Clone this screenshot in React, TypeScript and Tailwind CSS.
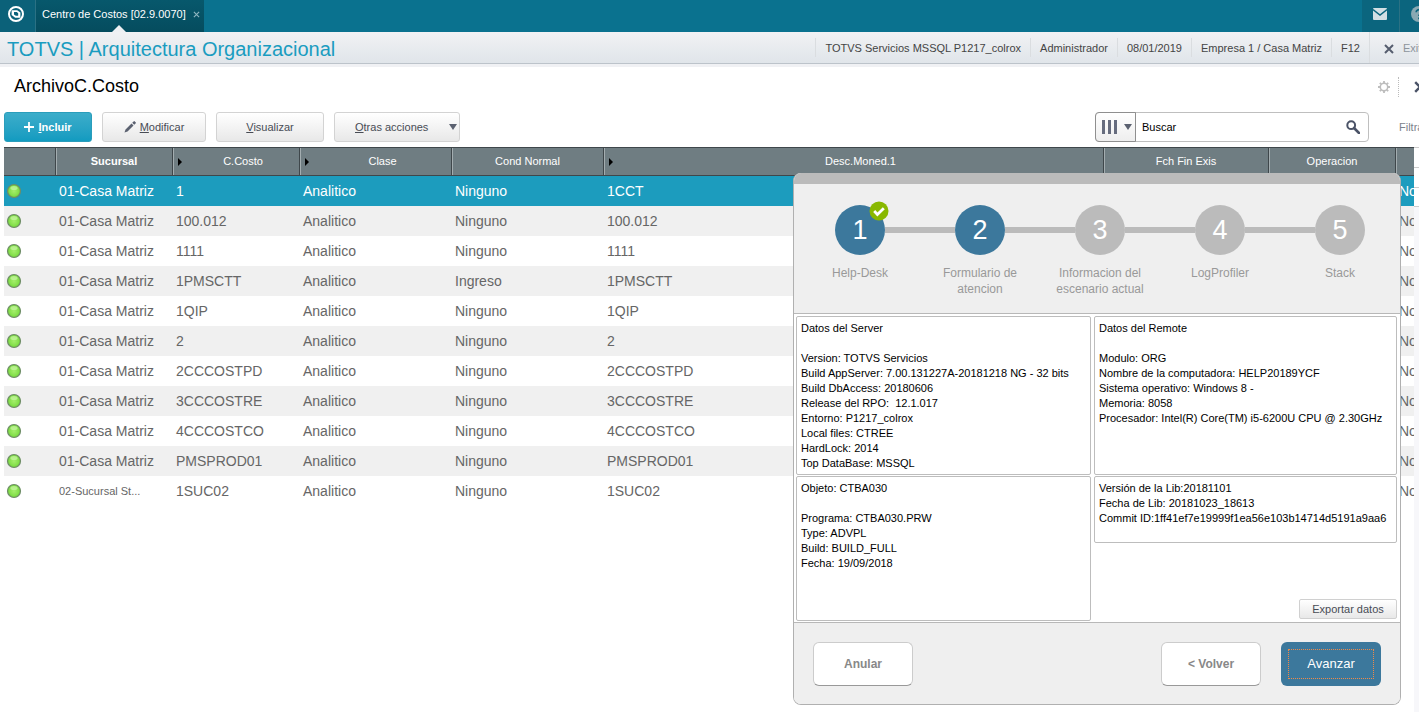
import type { ReactNode } from "react";
import { clsx } from "clsx";

type Row = {
  branch: string;
  code: string;
  kind: string;
  normal: string;
  desc: string;
};

const makeRow = (code: string, normal = "Ninguno", desc = code): Row => ({
  branch: "01-Casa Matriz",
  code,
  kind: "Analitico",
  normal,
  desc,
});

const rows: Row[] = [
  makeRow("1", "Ninguno", "1CCT"),
  makeRow("100.012"),
  makeRow("1111"),
  makeRow("1PMSCTT", "Ingreso"),
  makeRow("1QIP"),
  makeRow("2"),
  makeRow("2CCCOSTPD"),
  makeRow("3CCCOSTRE"),
  makeRow("4CCCOSTCO"),
  makeRow("PMSPROD01"),
  { ...makeRow("1SUC02"), branch: "02-Sucursal St..." },
];

const columns = [
  { label: "", width: "w-[52px]" },
  { label: "Sucursal", width: "w-[117px]", bold: true },
  { label: "C.Costo", width: "w-[127px]", arrow: true },
  { label: "Clase", width: "w-[152px]", arrow: true },
  { label: "Cond Normal", width: "w-[152px]" },
  { label: "Desc.Moned.1", width: "", arrow: true },
  { label: "Fch Fin Exis", width: "w-[165px]" },
  { label: "Operacion", width: "w-[127px]" },
  { label: "", width: "w-[18px]" },
];

const session = [
  "TOTVS Servicios MSSQL P1217_colrox",
  "Administrador",
  "08/01/2019",
  "Empresa 1 / Casa Matriz",
  "F12",
];

const steps = [
  { label: "Help-Desk", active: true, done: true },
  { label: "Formulario de atencion", active: true },
  { label: "Informacion del escenario actual" },
  { label: "LogProfiler" },
  { label: "Stack" },
];

const serverInfo = `Datos del Server

Version: TOTVS Servicios
Build AppServer: 7.00.131227A-20181218 NG - 32 bits
Build DbAccess: 20180606
Release del RPO:  12.1.017
Entorno: P1217_colrox
Local files: CTREE
HardLock: 2014
Top DataBase: MSSQL`;

const remoteInfo = `Datos del Remote

Modulo: ORG
Nombre de la computadora: HELP20189YCF
Sistema operativo: Windows 8 -
Memoria: 8058
Procesador: Intel(R) Core(TM) i5-6200U CPU @ 2.30GHz`;

const objectInfo = `Objeto: CTBA030

Programa: CTBA030.PRW
Type: ADVPL
Build: BUILD_FULL
Fecha: 19/09/2018`;

const libInfo = `Versión de la Lib:20181101
Fecha de Lib: 20181023_18613
Commit ID:1ff41ef7e19999f1ea56e103b14714d5191a9aa6`;

function CrossIcon({ className }: { className?: string }) {
  return (
    <svg viewBox="0 0 10 10" className={clsx("shrink-0", className)} aria-hidden="true">
      <path d="M1 1l8 8M9 1l-8 8" stroke="currentColor" strokeWidth="2" fill="none" />
    </svg>
  );
}

function StatusLight() {
  return (
    <svg viewBox="0 0 16 16" className="block size-4" role="img" aria-label="Activo">
      <defs>
        <radialGradient id="light" cx="50%" cy="50%" r="55%">
          <stop offset="0%" stopColor="#a5ee6c" />
          <stop offset="65%" stopColor="#85e04c" />
          <stop offset="100%" stopColor="#66c433" />
        </radialGradient>
      </defs>
      <circle cx="8" cy="8" r="6.5" fill="url(#light)" stroke="#6f8c68" strokeWidth="1.2" />
      <ellipse cx="8" cy="5" rx="3.6" ry="2" fill="#d3f9b4" opacity="0.6" />
    </svg>
  );
}

function TopBar() {
  return (
    <div className="flex h-8 bg-[#0a728f]">
      <div className="flex w-9 items-center border-r border-[#2b7184] bg-[#0b6179] pb-1 pl-2">
        <svg viewBox="0 0 16 16" className="size-4" aria-hidden="true">
          <circle cx="8" cy="8" r="7" fill="none" stroke="#fff" strokeWidth="2" />
          <path d="M3.6 4.2h5.6l3.2 2.4v5.2H7.2L3.6 9z" fill="#fff" />
          <path d="M6 6h2.8l1.4 1.2v2.6H7.8L6 8.4z" fill="#0b6179" />
        </svg>
      </div>
      <div className="relative flex w-[168px] items-center gap-[7px] bg-linear-to-b from-[#07586c] to-[#054c5e] pb-1 pl-1.5 text-[11px] whitespace-nowrap text-white">
        <span>Centro de Costos [02.9.0070]</span>
        <button aria-label="Cerrar" className="text-[#8fb6c1]">
          <svg viewBox="0 0 8 8" className="size-[7px]" aria-hidden="true">
            <path d="M1 1l6 6M7 1l-6 6" stroke="currentColor" strokeWidth="1.3" />
          </svg>
        </button>
        <svg viewBox="0 0 14 7" className="absolute bottom-0 left-[76px] h-[7px] w-3.5" aria-hidden="true">
          <path d="M0 7l7-7 7 7z" fill="#eef0f3" />
        </svg>
      </div>
      <div className="ml-auto flex overflow-hidden">
        <button aria-label="Mensajes" className="w-[37px] bg-[#0b657e] pb-1 pl-[11px]">
          <svg viewBox="0 0 14 12" className="h-3 w-3.5" aria-hidden="true">
            <rect width="14" height="12" rx="1" fill="#d3dfe4" />
            <path d="M0 1.5l7 5.5 7-5.5" fill="none" stroke="#0b657e" strokeWidth="1.4" />
          </svg>
        </button>
        <button aria-label="Ayuda" className="w-5 overflow-hidden border-l border-[#2b7184] bg-[#0b657e] pb-1 pl-[11px]">
          <svg viewBox="0 0 16 16" className="size-4 max-w-none" aria-hidden="true">
            <circle cx="8" cy="8" r="8" fill="#8aa9b3" />
            <path d="M5.2 6.2C5.2 2.8 11 3 10.6 6.2 10.4 8 8 8 8 10M8 11.5v1.7" fill="none" stroke="#0b657e" strokeWidth="1.7" />
          </svg>
        </button>
      </div>
    </div>
  );
}

function Header() {
  return (
    <header className="flex h-8 items-center overflow-hidden border-b border-[#bcc3ca] bg-linear-to-b from-[#f1f2f4] to-[#e0e5ea] whitespace-nowrap">
      <h1 className="pt-0.5 pl-[7px] text-xl text-[#1a9cc0]">TOTVS | Arquitectura Organizacional</h1>
      <div className="ml-auto flex h-full text-[11px] text-[#444] *:border-l *:border-[#dadde0]">
        {session.map((s) => (
          <span key={s} className="my-1.5 flex items-center px-[9px] pt-0.5">
            {s}
          </span>
        ))}
        <button className="flex w-[50px] items-center gap-[9px] overflow-hidden pt-0.5 pl-3.5 text-[#8d949c]">
          <CrossIcon className="size-2.5 text-[#555d6e]" />
          Exit
        </button>
      </div>
    </header>
  );
}

function ToolButton({ className, children }: { className?: string; children: ReactNode }) {
  return (
    <button
      className={clsx(
        "flex h-[30px] items-center justify-center rounded-[3px] border border-[#d3d3d3] bg-linear-to-b from-white to-[#e8e8e8] text-[11px] text-[#484c55]",
        className,
      )}
    >
      {children}
    </button>
  );
}

function Toolbar() {
  return (
    <div className="flex pl-1 whitespace-nowrap">
      <button className="flex h-[30px] w-[88px] items-center justify-center gap-1 rounded-[3px] border border-[#2a9dbb] bg-linear-to-b from-[#3badca] to-[#119bc0] text-[11px] font-bold text-white">
        <svg viewBox="0 0 10 10" className="size-2.5" aria-hidden="true">
          <path d="M5 0v10M0 5h10" stroke="#fff" strokeWidth="1.8" />
        </svg>
        <span>
          <u>I</u>ncluir
        </span>
      </button>
      <ToolButton className="ml-2.5 w-[104px] gap-1">
        <svg viewBox="0 0 12 12" className="size-3" aria-hidden="true">
          <path d="M0.5 11.5l1-3 6-6 2 2-6 6zM8.2 1.8l1.4-1.4q.6-.6 1.2 0l.8.8q.6.6 0 1.2l-1.4 1.4z" fill="#5b6170" />
        </svg>
        <span>
          <u>M</u>odificar
        </span>
      </ToolButton>
      <ToolButton className="ml-2.5 w-[108px]">
        <span>
          <u>V</u>isualizar
        </span>
      </ToolButton>
      <ToolButton className="ml-2.5 w-[126px] pr-0.5 pl-5">
        <span className="flex-1 text-left">
          <u>O</u>tras acciones
        </span>
        <svg viewBox="0 0 8 6" className="h-1.5 w-2" aria-hidden="true">
          <path d="M0 0h8L4 6z" fill="#5b6170" />
        </svg>
      </ToolButton>

      <form className="ml-auto flex h-[30px] w-[274px] items-center rounded-[4px] border border-[#bfbfbf] bg-white">
        <button
          type="button"
          aria-label="Columnas"
          className="-my-px -ml-px flex h-[30px] w-[41px] items-center gap-[7px] rounded-l-[4px] border border-[#8f8f8f] bg-linear-to-b from-white to-[#eee] pl-1.5"
        >
          <svg viewBox="0 0 15 14" className="h-3.5 w-[15px]" aria-hidden="true">
            <path d="M0 0h3v14H0zM6 0h3v14H6zM12 0h3v14h-3z" fill="#666c7e" />
          </svg>
          <svg viewBox="0 0 8 6" className="h-1.5 w-2" aria-hidden="true">
            <path d="M0 0h8L4 6z" fill="#5b6170" />
          </svg>
        </button>
        <input
          aria-label="Buscar"
          placeholder="Buscar"
          className="min-w-0 flex-1 px-1.5 text-[11px] outline-none placeholder:text-black"
        />
        <button type="button" aria-label="Ejecutar búsqueda" className="pr-2">
          <svg viewBox="0 0 14 14" className="size-3.5" aria-hidden="true">
            <circle cx="5.2" cy="5.2" r="3.9" fill="none" stroke="#4b5367" strokeWidth="2" />
            <path d="M8 8l5 5" stroke="#4b5367" strokeWidth="2.6" strokeLinecap="round" />
          </svg>
        </button>
      </form>
      <button className="ml-[30px] w-5 overflow-hidden text-left text-[11px] text-[#7c828c]">Filtrar</button>
    </div>
  );
}

function CostTable() {
  return (
    <table className="w-full table-fixed border-separate border-spacing-0">
      <thead>
        <tr className="h-[29px] bg-[#6f7d82] text-[11px] text-white">
          {columns.map((c, i) => (
            <th
              key={i}
              scope="col"
              className={clsx(
                "relative border-y border-[#3f474b] p-0 pb-px",
                c.width,
                c.bold ? "font-bold" : "font-normal",
                i < columns.length - 1 && "border-r",
                i > 0 && "shadow-[inset_1px_0_0_#a3adb0]",
              )}
            >
              {c.arrow && (
                <svg viewBox="0 0 4 8" className="absolute top-2.5 left-[5px] h-2 w-1" aria-hidden="true">
                  <path d="M0 0l4 4-4 4z" fill="#000" />
                </svg>
              )}
              <span className={clsx(c.arrow && "pl-3.5")}>{c.label}</span>
            </th>
          ))}
        </tr>
      </thead>
      <tbody>
        {rows.map((r, i) => (
          <tr
            key={r.code}
            className={clsx(
              "h-[30px] text-sm whitespace-nowrap",
              i === 0 ? "bg-[#1c9cbe] text-white" : "text-[#666]",
              i % 2 === 1 && "bg-[#f0f0f0]",
            )}
          >
            <td className="p-0 pl-0.5">
              <StatusLight />
            </td>
            <td className={clsx("p-0 pl-[3px]", r.branch.startsWith("02") && "pt-0.5 text-[11px]")}>{r.branch}</td>
            <td className="p-0 pl-[3px]">{r.code}</td>
            <td className="p-0 pl-[3px]">{r.kind}</td>
            <td className="p-0 pl-[3px]">{r.normal}</td>
            <td className="p-0 pl-[3px]">{r.desc}</td>
            <td />
            <td />
            <td className="overflow-hidden p-0 pl-[3px]">No</td>
          </tr>
        ))}
      </tbody>
    </table>
  );
}

function Stepper() {
  return (
    <ol className="grid h-[130px] grid-cols-5 border-b border-[#b8b8b8] bg-[#efefef] pt-[21px] pl-1.5">
      {steps.map((s, i) => (
        <li key={s.label} className="flex flex-col items-center">
          <div className="flex w-full items-center">
            <span className={clsx("h-1.5 flex-1", i > 0 && "bg-[#bbb]")} />
            <span
              className={clsx(
                "relative flex size-[50px] items-center justify-center rounded-full text-[27px] text-white",
                s.active ? "bg-[#3c789c]" : "bg-[#bbb]",
              )}
            >
              {i + 1}
              {s.done && (
                <svg viewBox="0 0 20 20" className="absolute -top-1 -right-1 size-5" aria-hidden="true">
                  <circle cx="10" cy="10" r="9.5" fill="#89b800" />
                  <path d="M5.2 10l3.2 3.4 6.4-6.2" fill="none" stroke="#fff" strokeWidth="2.8" />
                </svg>
              )}
            </span>
            <span className={clsx("h-1.5 flex-1", i < steps.length - 1 && "bg-[#bbb]")} />
          </div>
          <span className="mt-2.5 w-[100px] text-center text-xs leading-4 text-[#999]">{s.label}</span>
        </li>
      ))}
    </ol>
  );
}

function InfoPanel({ text, className }: { text: string; className?: string }) {
  return (
    <p
      className={clsx(
        "rounded-[2px] border border-[#bdbdbd] p-1 text-[11px] leading-[15px] whitespace-pre text-black",
        className,
      )}
    >
      {text}
    </p>
  );
}

function SupportDialog() {
  return (
    <section
      role="dialog"
      aria-label="Help-Desk"
      className="absolute top-[173px] right-[18px] w-[608px] overflow-hidden rounded-lg border border-t-0 border-[#b0b0b0] bg-white"
    >
      <div className="h-[11px] bg-[#bbb]" />
      <Stepper />
      <div className="grid grid-cols-[295fr_303fr] gap-x-[3px] pt-0.5 pr-[3px] pb-px pl-0.5">
        <div className="flex flex-col gap-px">
          <InfoPanel text={serverInfo} className="h-[159px]" />
          <InfoPanel text={objectInfo} className="h-[145px]" />
        </div>
        <div className="flex flex-col gap-px">
          <InfoPanel text={remoteInfo} className="h-[159px]" />
          <InfoPanel text={libInfo} className="h-[67px]" />
          <button className="mt-auto mb-0.5 h-5 w-[98px] self-end rounded-[2px] border border-[#d0d0d0] bg-linear-to-b from-white to-[#e8e8e8] text-[11px] leading-none text-[#484c55]">
            Exportar datos
          </button>
        </div>
      </div>
      <footer className="flex gap-5 border-t border-[#b8b8b8] bg-[#efefef] px-[19px] pt-[19px] pb-[18px] text-xs">
        <button className="mr-auto h-11 w-[100px] rounded-md border border-[#ccc] border-b-[#999] bg-white font-bold text-[#888]">
          Anular
        </button>
        <button className="h-11 w-[100px] rounded-md border border-[#ccc] border-b-[#999] bg-white font-bold text-[#888]">
          &lt; Volver
        </button>
        <button className="h-11 w-[100px] rounded-md bg-[#3c789c] p-[7px] text-[13px] text-white">
          <span className="flex h-full items-center justify-center border border-dotted border-[#f08a48]">Avanzar</span>
        </button>
      </footer>
    </section>
  );
}

export default function App() {
  return (
    <div className="relative flex min-h-screen flex-col overflow-hidden bg-white font-['Liberation_Sans',Arial,sans-serif]">
      <TopBar />
      <Header />
      <div className="h-[3px] bg-[#f0f1f4]" />
      <div className="flex h-[45px] items-center overflow-hidden pb-[7px] pl-3.5">
        <h2 className="text-lg text-black">ArchivoC.Costo</h2>
        <button aria-label="Configuración" className="mt-0.5 ml-auto pr-2">
          <svg viewBox="0 0 12 12" className="size-3" aria-hidden="true">
            <circle cx="6" cy="6" r="3.7" fill="none" stroke="#bdbdbd" strokeWidth="1.5" />
            <path
              d="M6 0v2M6 10v2M0 6h2M10 6h2M1.8 1.8l1.4 1.4M8.8 8.8l1.4 1.4M10.2 1.8L8.8 3.2M3.2 8.8l-1.4 1.4"
              stroke="#bdbdbd"
              strokeWidth="1.8"
            />
          </svg>
        </button>
        <span className="mt-0.5 h-5 border-l border-dotted border-[#bbb]" />
        <button aria-label="Cerrar ventana" className="mt-0.5 w-5 overflow-hidden pl-[15px]">
          <CrossIcon className="size-3 max-w-none text-[#4b5367]" />
        </button>
      </div>
      <Toolbar />
      <main className="mt-[5px] flex flex-1 pl-1">
        <div className="min-w-0 flex-1">
          <CostTable />
        </div>
        <div className="w-[5px] bg-[#f7f7fa]">
          <div className="h-5 border-t border-[#ccc] bg-white" />
          <div className="h-5 border-t border-[#ccc] bg-white" />
          <div className="h-5 border-y border-[#ccc] bg-white" />
        </div>
      </main>
      <SupportDialog />
    </div>
  );
}
